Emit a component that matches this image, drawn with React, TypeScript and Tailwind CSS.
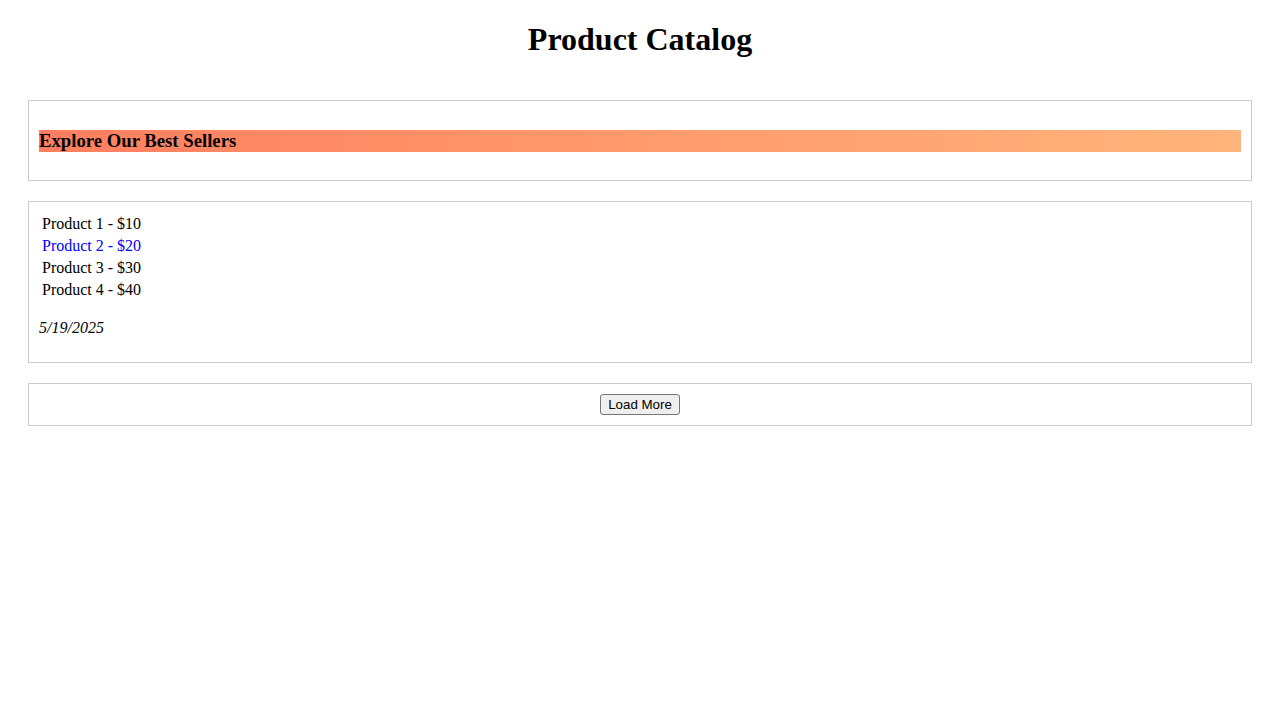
import React from 'react';

const products = [
    { name: 'Product 1', price: 10 },
    { name: 'Product 2', price: 20 },
    { name: 'Product 3', price: 30 },
    { name: 'Product 4', price: 40 },
];

function App() {
    return (
        <div className="min-h-screen bg-white text-black font-['Liberation_Serif',serif] px-7 pt-[21px] flex flex-col">
            <h1 className="text-[32px] font-bold text-center h-[37px] leading-[37px]">Product Catalog</h1>

            <section className="mt-[42px] border border-[#ccc] px-[10px] pt-[29px] pb-[28px]">
                <h3 className="text-[18.72px] font-bold h-[22px] leading-[22px] bg-gradient-to-r from-[#ff7e5f] to-[#feb47b]">
                    Explore Our Best Sellers
                </h3>
            </section>

            <section className="mt-5 border border-[#ccc] px-[10px] pt-[11px] pb-[23px]">
                <ul className="flex flex-col">
                    {products.map((p, i) => (
                        <li
                            key={p.name}
                            className={`h-[22px] leading-[22px] pl-[3px] text-base ${i === 1 ? 'text-[#0000ff]' : 'text-black'}`}
                        >
                            {p.name} - ${p.price}
                        </li>
                    ))}
                </ul>
                <p className="mt-4 italic h-[22px] leading-[22px] text-base">5/19/2025</p>
            </section>

            <section className="mt-5 border border-[#ccc] p-[10px] flex justify-center">
                <button className="h-[21px] px-[7px] border border-[#767676] rounded-[3px] bg-[#efefef] text-[13.33px] leading-[17px] font-['Liberation_Sans',sans-serif] text-black">
                    Load More
                </button>
            </section>
        </div>
    );
}

export default App;
